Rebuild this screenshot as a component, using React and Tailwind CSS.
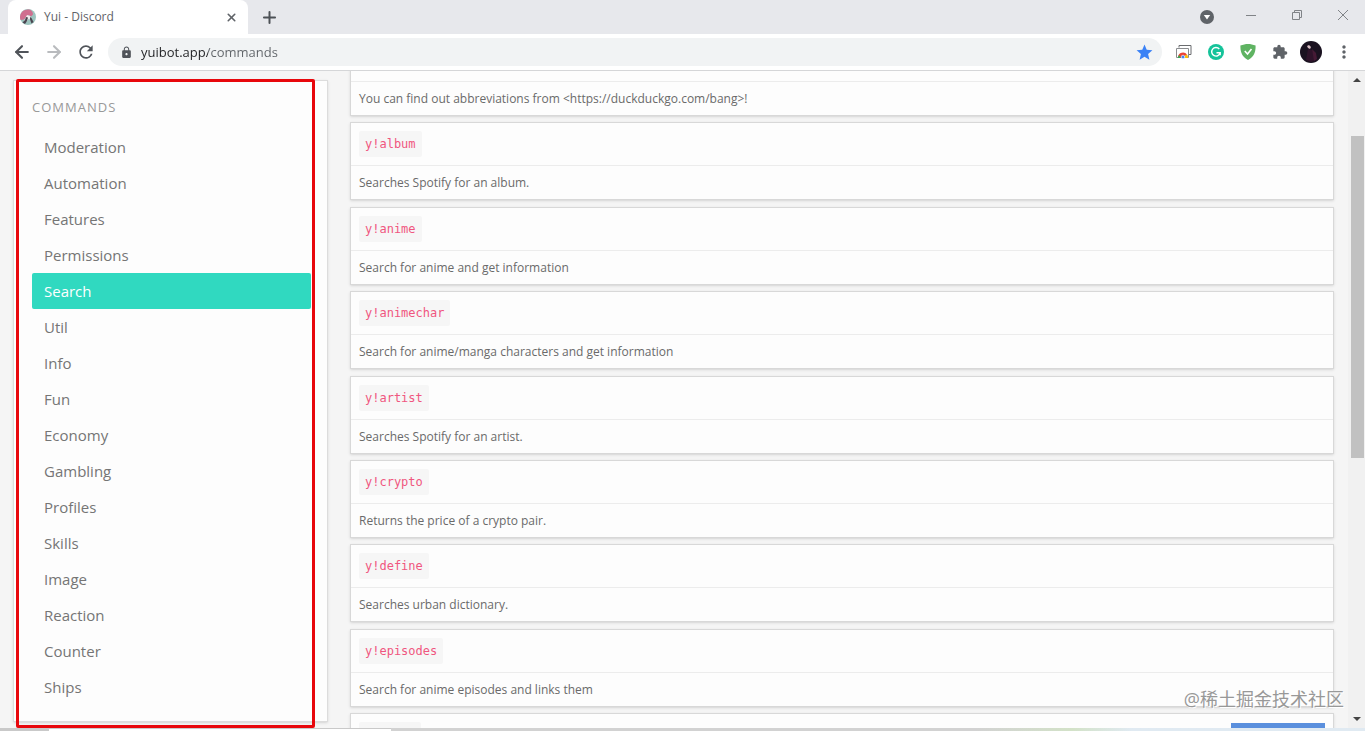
import React, { useState } from 'react';
import { ArrowLeft, ArrowRight, Plus, X } from 'lucide-react';
import { MdLock, MdStar, MdExtension, MdMoreVert, MdRefresh } from 'react-icons/md';

const categories = [
  'Moderation',
  'Automation',
  'Features',
  'Permissions',
  'Search',
  'Util',
  'Info',
  'Fun',
  'Economy',
  'Gambling',
  'Profiles',
  'Skills',
  'Image',
  'Reaction',
  'Counter',
  'Ships',
];

const commands = [
  { id: 'bang', description: 'You can find out abbreviations from <https://duckduckgo.com/bang>!' },
  { id: 'album', name: 'y!album', description: 'Searches Spotify for an album.' },
  { id: 'anime', name: 'y!anime', description: 'Search for anime and get information' },
  { id: 'animechar', name: 'y!animechar', description: 'Search for anime/manga characters and get information' },
  { id: 'artist', name: 'y!artist', description: 'Searches Spotify for an artist.' },
  { id: 'crypto', name: 'y!crypto', description: 'Returns the price of a crypto pair.' },
  { id: 'define', name: 'y!define', description: 'Searches urban dictionary.' },
  { id: 'episodes', name: 'y!episodes', description: 'Search for anime episodes and links them' },
  { id: 'next', name: '', description: '' },
];

const Favicon = () => (
  <svg viewBox="0 0 16 16" className="size-4 shrink-0">
    <circle cx="8" cy="8" r="8" fill="#9cc4be" />
    <path d="M0 9C0 4 3 .5 8 .5c3 0 5 2 5 5l-2 2-2-1.500-3 2-2 2.500-3.500.5z" fill="#cf6f8f" />
    <path d="M7 6l3 1 1.500 3-1 1.500L9 9.500 6 13l-2-1 2-4z" fill="#f5eef0" />
    <path d="M6 8l2 .5L7 12l-2 3-2.500-1.500L5 11zM10 8l1.500 1 2 4-2 1.500-1.500-4z" fill="#4b4550" />
  </svg>
);

const TabStrip = () => (
  <div className="flex h-[34px] items-end bg-[#e7e8ec] pl-2">
    <div className="flex h-[34px] w-60 items-center rounded-t-lg bg-white pr-2 pl-3">
      <Favicon />
      <span className="ml-2 flex-1 text-xs text-[#5f6368]">Yui - Discord</span>
      <button type="button" aria-label="Close tab" className="p-0.5 text-[#5f6368]">
        <X size={13} strokeWidth={3} />
      </button>
    </div>
    <button type="button" aria-label="New tab" className="ml-3 self-center text-[#4d5156]">
      <Plus size={19} strokeWidth={2.5} />
    </button>
    <div className="ml-auto flex items-center gap-8 self-center pr-[17px]">
      <button type="button" aria-label="Search tabs">
        <svg viewBox="0 0 14 14" className="size-[14px]">
          <circle cx="7" cy="7" r="7" fill="#5f6368" />
          <path d="M3.8 5h6.4L7 9.6z" fill="#fff" />
        </svg>
      </button>
      <div className="flex items-center gap-9 pb-1">
        <button type="button" aria-label="Minimize">
          <svg viewBox="0 0 10 10" className="size-[10px]" stroke="#808387">
            <path d="M0 5.5h10" />
          </svg>
        </button>
        <button type="button" aria-label="Restore">
          <svg viewBox="0 0 10 10" className="size-[10px]" fill="none" stroke="#808387">
            <path d="M.5 2.5h7v7h-7zM2.5 2.5V.5h7v7h-2" />
          </svg>
        </button>
        <button type="button" aria-label="Close">
          <svg viewBox="0 0 10 10" className="size-[10px]" stroke="#808387">
            <path d="M0 0l10 10M10 0L0 10" />
          </svg>
        </button>
      </div>
    </div>
  </div>
);

const Extensions = () => (
  <div className="flex items-center gap-4 pr-[11px]">
    <button type="button" aria-label="Cast tabs">
      <svg viewBox="0 0 16 16" className="size-4" fill="none">
        <path d="M3 3.500v-2h12v9h-2" stroke="#6b6d70" />
        <path d="M.5 13.500v-9h12v9z" stroke="#8a8c8f" fill="#fff" />
        <path d="M2 14v-1a5 5 0 0 1 9-2.500L9 12H6.500v2z" fill="#ea4335" />
        <path d="M2 14c0-1.500.5-2.500 1-3l2 3z" fill="#34a853" />
        <path d="M9 11.500l2-1c.7 1 1 2 1 3.500H9z" fill="#fbbc04" />
        <circle cx="7" cy="13" r="1.800" fill="#4285f4" stroke="#fff" strokeWidth=".6" />
      </svg>
    </button>
    <button type="button" aria-label="Grammar">
      <svg viewBox="0 0 16 16" className="size-4" fill="none">
        <circle cx="8" cy="8" r="8" fill="#15c39a" />
        <path d="M11.300 5A4.300 4.300 0 1 0 12.200 8.700H8.500M12.200 8.700v2.500" stroke="#fff" strokeWidth="1.400" />
      </svg>
    </button>
    <button type="button" aria-label="Ad blocker">
      <svg viewBox="0 0 16 16" className="size-4" fill="none">
        <path d="M8 0c2.500 0 5 .6 7.600 1.600C15.800 8 14 12.800 8 16 2 12.800.2 8 .4 1.600 3 .6 5.500 0 8 0z" fill="#5fb362" />
        <path d="M4.800 7l2.700 3 4-5" stroke="#fff" strokeWidth="1.600" />
      </svg>
    </button>
    <button type="button" aria-label="Extensions" className="text-[#5f6368]">
      <MdExtension size={16} />
    </button>
    <button type="button" aria-label="Profile" className="-mx-1">
      <svg viewBox="0 0 22 22" className="size-[22px]">
        <circle cx="11" cy="11" r="11" fill="#1a1220" />
        <path d="M8 8l4 1 4 10-5 2-5-2z" fill="#2e132a" />
        <path d="M12 8l4 4 1 6-3 2z" fill="#451a35" />
        <path d="M7 5l2-1 2 2-1 2-2-1z" fill="#d9bfc4" />
      </svg>
    </button>
    <button type="button" aria-label="Menu" className="text-[#5f6368]">
      <MdMoreVert size={20} />
    </button>
  </div>
);

const Toolbar = () => (
  <div className="flex h-[37px] items-center border-b border-[#d5d6d8] bg-white text-[#50545a]">
    <div className="flex items-center gap-3 px-3">
      <button type="button" aria-label="Back">
        <ArrowLeft size={20} strokeWidth={2.5} />
      </button>
      <button type="button" aria-label="Forward" className="text-[#b9bbbe]">
        <ArrowRight size={20} strokeWidth={2.5} />
      </button>
      <button type="button" aria-label="Reload">
        <MdRefresh size={20} />
      </button>
    </div>
    <div className="mr-3.5 flex h-7 flex-1 items-center rounded-full bg-[#f1f3f4] pr-2 pl-3">
      <MdLock size={13} className="shrink-0" />
      {/* host is darker than the path */}
      <input
        type="text"
        aria-label="Address"
        className="ml-2 h-6 min-w-0 flex-1 bg-linear-to-r from-[#202124] from-[67px] to-[#5f6368] to-[67px] bg-clip-text text-[13px] text-transparent caret-black outline-none"
        defaultValue="yuibot.app/commands"
      />
      <button type="button" aria-label="Bookmark" className="text-[#3b82f6]">
        <MdStar size={19} />
      </button>
    </div>
    <Extensions />
  </div>
);

const Sidebar = ({ active, onSelect }) => (
  <aside className="relative mt-[9px] mb-1.5 ml-[13px] w-[315px] shrink-0 border border-[#dcdcdc] bg-[#fdfdfd] pr-4 pl-[18px] shadow-sm">
    <p className="pt-4 pb-3 text-[13px] leading-5 tracking-[1px] text-[#999] uppercase">Commands</p>
    <ul>
      {categories.map((category) => (
        <li key={category}>
          <a
            href={`#${category.toLowerCase()}`}
            onClick={() => onSelect(category)}
            className={`block rounded-xs px-3 text-[15px] leading-9 ${
              category === active ? 'bg-[#30d9c0] text-white' : 'text-[#757575]'
            }`}
          >
            {category}
          </a>
        </li>
      ))}
    </ul>
    <div className="pointer-events-none absolute -top-0.5 right-3 -bottom-[7px] left-0.5 rounded-xs border-3 border-[#e8070c]" />
  </aside>
);

const CommandCard = ({ name, description }) => (
  <article className="h-[78px] shrink-0 border border-[#d8d8d8] bg-[#fdfdfd] shadow-sm">
    <header className="flex h-[43px] items-center border-b border-[#ececec] px-2">
      {name !== undefined && (
        <code className="h-[26px] min-w-[62px] rounded-xs bg-[#f6f6f6] px-1.5 font-['DejaVu_Sans_Mono',monospace] text-xs leading-[26px] text-[#f0567f]">
          {name}
        </code>
      )}
    </header>
    <p className="px-2 text-xs leading-[34px] text-[#6a6a6a]">{description}</p>
  </article>
);

const Scrollbar = () => (
  <div className="flex w-[17px] shrink-0 flex-col items-center bg-[#f1f1f1]">
    <svg viewBox="0 0 8 4" className="mt-[7px] h-1 w-2" fill="#444">
      <path d="M4 0l4 4H0z" />
    </svg>
    <div className="mt-[54px] mr-px h-[49%] w-[13px] self-end bg-[#c1c1c1]" />
    <svg viewBox="0 0 8 4" className="mt-auto mb-[7px] h-1 w-2" fill="#444">
      <path d="M0 0h8L4 4z" />
    </svg>
  </div>
);

const App = () => {
  const [active, setActive] = useState('Search');

  return (
    <div className="flex h-screen flex-col overflow-hidden bg-[#f5f5f5] font-['Open_Sans','Noto_Sans_CJK_SC',sans-serif]">
      <TabStrip />
      <Toolbar />
      <div className="relative flex min-h-0 flex-1 overflow-hidden">
        <Sidebar active={active} onSelect={setActive} />
        <main className="-mt-[33px] -mb-[63px] ml-[22px] flex min-w-0 flex-1 flex-col justify-between">
          {commands.map((command) => (
            <CommandCard key={command.id} name={command.name} description={command.description} />
          ))}
        </main>
        <div className="w-3.5 shrink-0" />
        <Scrollbar />
        <div className="absolute right-10 bottom-0 h-[5px] w-[94px] bg-[#5a8fdd]" />
        <span className="absolute right-[21px] bottom-[17px] text-lg leading-6 text-[#989898] [text-shadow:1px_1px_0_#fff]">
          @稀土掘金技术社区
        </span>
      </div>
      <footer className="flex h-[3px] shrink-0">
        <div className="w-[49px] bg-[#c9c9c9]" />
        <div className="w-[342px] border-t border-[#c9c9c9] bg-white" />
        <div className="flex-1 bg-linear-to-r from-[#d2d2d2] from-60% via-[#d3e2c8] via-70% to-[#e0eaf2] to-76%" />
      </footer>
    </div>
  );
};

export default App;
